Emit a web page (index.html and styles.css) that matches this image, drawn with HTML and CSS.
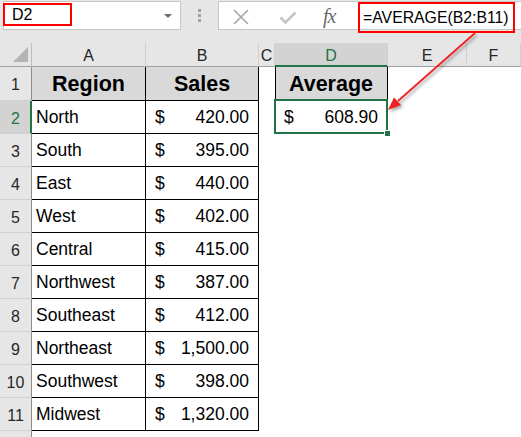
FILE: index.html
```html
<!DOCTYPE html>
<html>
<head>
<meta charset="utf-8">
<link rel="stylesheet" href="styles.css">
</head>
<body>
<div class="app">
  <div class="toolbar">
    <div class="namebox">
      <span class="name-hl">D2</span>
      <span class="dd"></span>
    </div>
    <div class="dots"><i></i><i></i><i></i></div>
    <div class="fbar">
      <svg class="ico-x" width="16" height="16" viewBox="0 0 16 16"><path d="M1 1 L15 15 M15 1 L1 15" stroke="#a6a6a6" stroke-width="1.6" fill="none"/></svg>
      <svg class="ico-ok" width="18" height="14" viewBox="0 0 18 14"><path d="M1.5 6.5 L6.5 11.5 L16.5 1.5" stroke="#c4c4c4" stroke-width="2.6" fill="none"/></svg>
      <span class="fx">fx</span>
      <span class="formula">=AVERAGE(B2:B11)</span>
    </div>
  </div>

  <div class="sheet">
    <!-- column headers -->
    <div class="corner"><svg width="31" height="23" viewBox="0 0 31 23"><path d="M28 4 L28 19 L13 19 Z" fill="#b4b4b4"/></svg></div>
    <div class="ch">A</div>
    <div class="ch">B</div>
    <div class="ch">C</div>
    <div class="ch sel">D</div>
    <div class="ch">E</div>
    <div class="ch">F</div>

    <!-- row 1 -->
    <div class="rh">1</div>
    <div class="t hd">Region</div>
    <div class="t hd">Sales</div>
    <div class="c"></div>
    <div class="t hd dl">Average</div>
    <div class="c"></div>
    <div class="c"></div>

    <!-- row 2 -->
    <div class="rh sel">2</div>
    <div class="t txt">North</div>
    <div class="t num"><span>$</span><span>420.00</span></div>
    <div class="c"></div>
    <div class="t num dl active"><span>$</span><span>608.90</span><div class="selbox"><div class="handle"></div></div></div>
    <div class="c"></div>
    <div class="c"></div>

    <!-- row 3 -->
    <div class="rh">3</div>
    <div class="t txt">South</div>
    <div class="t num"><span>$</span><span>395.00</span></div>
    <div class="c"></div><div class="c"></div><div class="c"></div><div class="c"></div>

    <!-- row 4 -->
    <div class="rh">4</div>
    <div class="t txt">East</div>
    <div class="t num"><span>$</span><span>440.00</span></div>
    <div class="c"></div><div class="c"></div><div class="c"></div><div class="c"></div>

    <!-- row 5 -->
    <div class="rh">5</div>
    <div class="t txt">West</div>
    <div class="t num"><span>$</span><span>402.00</span></div>
    <div class="c"></div><div class="c"></div><div class="c"></div><div class="c"></div>

    <!-- row 6 -->
    <div class="rh">6</div>
    <div class="t txt">Central</div>
    <div class="t num"><span>$</span><span>415.00</span></div>
    <div class="c"></div><div class="c"></div><div class="c"></div><div class="c"></div>

    <!-- row 7 -->
    <div class="rh">7</div>
    <div class="t txt">Northwest</div>
    <div class="t num"><span>$</span><span>387.00</span></div>
    <div class="c"></div><div class="c"></div><div class="c"></div><div class="c"></div>

    <!-- row 8 -->
    <div class="rh">8</div>
    <div class="t txt">Southeast</div>
    <div class="t num"><span>$</span><span>412.00</span></div>
    <div class="c"></div><div class="c"></div><div class="c"></div><div class="c"></div>

    <!-- row 9 -->
    <div class="rh">9</div>
    <div class="t txt">Northeast</div>
    <div class="t num"><span>$</span><span>1,500.00</span></div>
    <div class="c"></div><div class="c"></div><div class="c"></div><div class="c"></div>

    <!-- row 10 -->
    <div class="rh">10</div>
    <div class="t txt">Southwest</div>
    <div class="t num"><span>$</span><span>398.00</span></div>
    <div class="c"></div><div class="c"></div><div class="c"></div><div class="c"></div>

    <!-- row 11 -->
    <div class="rh">11</div>
    <div class="t txt">Midwest</div>
    <div class="t num"><span>$</span><span>1,320.00</span></div>
    <div class="c"></div><div class="c"></div><div class="c"></div><div class="c"></div>

    <!-- row 12 (partial) -->
    <div class="rh last"></div>
    <div class="c"></div><div class="c"></div><div class="c"></div><div class="c"></div><div class="c"></div><div class="c"></div>
  </div>

  <svg class="arrow" width="521" height="437" viewBox="0 0 521 437">
    <defs>
      <filter id="sh" x="-20%" y="-20%" width="140%" height="140%">
        <feDropShadow dx="2" dy="2" stdDeviation="1.5" flood-color="#000" flood-opacity="0.35"/>
      </filter>
    </defs>
    <g filter="url(#sh)">
      <line x1="475" y1="33" x2="398" y2="101" stroke="#ee2222" stroke-width="1.8"/>
      <polygon points="388,110 401,105 394,97.5" fill="#ee2222"/>
    </g>
  </svg>
</div>
</body>
</html>
```

FILE: styles.css
```css
* { box-sizing: border-box; }
html, body { margin: 0; padding: 0; }
body {
  width: 521px;
  height: 437px;
  overflow: hidden;
  background: #fff;
  font-family: "Liberation Sans", Arial, sans-serif;
}
.app {
  position: relative;
  width: 521px;
  height: 437px;
  display: flex;
  flex-direction: column;
}

/* ---------- toolbar ---------- */
.toolbar {
  height: 43px;
  flex: none;
  background: #e6e6e6;
  display: flex;
  align-items: flex-start;
}
.namebox {
  margin-left: 3px;
  margin-top: 1px;
  width: 178px;
  height: 29px;
  background: #fff;
  border: 1px solid #c6c6c6;
  display: flex;
  align-items: flex-start;
}
.name-hl {
  display: flex;
  align-items: center;
  width: 69px;
  height: 23px;
  margin-left: -1px;
  margin-top: 1px;
  padding-left: 7px;
  padding-top: 1px;
  border: 2px solid #ff0000;
  font-size: 16px;
  color: #000;
}
.dd {
  margin-left: auto;
  margin-right: 8px;
  margin-top: 12px;
  width: 0;
  height: 0;
  border-left: 4px solid transparent;
  border-right: 4px solid transparent;
  border-top: 4px solid #6e6e6e;
}
.dots {
  margin-left: 17px;
  margin-top: 9px;
  display: flex;
  flex-direction: column;
  gap: 2px;
}
.dots i {
  display: block;
  width: 3px;
  height: 3px;
  background: #a3a3a3;
}
.fbar {
  margin-left: 17px;
  margin-top: 1px;
  margin-right: -3px;
  flex: 1;
  height: 29px;
  background: #fff;
  border: 1px solid #c6c6c6;
  display: flex;
  align-items: flex-start;
}
.ico-x { margin-left: 14px; margin-top: 7px; flex: none; }
.ico-ok { margin-left: 30px; margin-top: 9px; flex: none; }
.fx {
  margin-left: 26px;
  margin-top: 3px;
  width: 20px;
  flex: none;
  font-family: "Liberation Serif", "DejaVu Serif", serif;
  font-style: italic;
  font-size: 20px;
  color: #6a6a6a;
  letter-spacing: -1px;
}
.formula {
  margin-left: 15px;
  margin-top: 0px;
  height: 31px;
  width: 157px;
  flex: none;
  border: 2px solid #ff0000;
  padding-left: 3px;
  padding-top: 1px;
  display: flex;
  align-items: center;
  font-size: 15.8px;
  color: #000;
  white-space: nowrap;
}

/* ---------- sheet ---------- */
.sheet {
  flex: 1;
  display: grid;
  grid-template-columns: 32px 114px 113px 16px 113px 79px 1fr;
  grid-template-rows: 24px 34px repeat(10, 33px) 1fr;
  background: #fff;
}
.corner {
  background: #e6e6e6;
  border-right: 1px solid #bdbdbd;
  border-bottom: 1px solid #a0a0a0;
}
.corner svg { display: block; }
.ch {
  background: #e6e6e6;
  border-right: 1px solid #cfcfcf;
  border-bottom: 1px solid #a0a0a0;
  display: flex;
  align-items: center;
  justify-content: center;
  padding-top: 3px;
  font-size: 16px;
  color: #262626;
}
.ch.sel {
  background: #d3d3d3;
  color: #217346;
  border-bottom: 2px solid #217346;
  padding-top: 4px;
}
.rh {
  background: #e6e6e6;
  border-right: 1px solid #8c8c8c;
  border-bottom: 1px solid #cfcfcf;
  display: flex;
  align-items: center;
  justify-content: center;
  padding-top: 3px;
  font-size: 16px;
  color: #262626;
}
.rh.sel {
  background: #d3d3d3;
  color: #217346;
  border-right: 2px solid #217346;
  padding-left: 1px;
}
.rh.last { border-bottom: none; }
.c { background: #fff; }
.t {
  background: #fff;
  border-right: 1px solid #000;
  border-bottom: 1px solid #000;
  display: flex;
  align-items: center;
  font-size: 17.5px;
  color: #000;
  padding-top: 1px;
}
.hd {
  background: #d9d9d9;
  justify-content: center;
  font-weight: bold;
  font-size: 21.5px;
  padding-top: 2px;
}
.dl { box-shadow: inset 1px 0 0 #000; }
.txt { padding-left: 4px; }
.num {
  justify-content: space-between;
  padding-left: 9px;
  padding-right: 9px;
}
.active { position: relative; }
.selbox {
  position: absolute;
  top: -2px;
  left: -1px;
  right: -1px;
  bottom: -1px;
  border: 2px solid #217346;
}
.handle {
  position: absolute;
  right: -5px;
  bottom: -5px;
  width: 7px;
  height: 7px;
  background: #217346;
  border: 1px solid #fff;
}

/* ---------- annotation arrow ---------- */
.arrow {
  position: absolute;
  left: 0;
  top: 0;
  pointer-events: none;
}
```
